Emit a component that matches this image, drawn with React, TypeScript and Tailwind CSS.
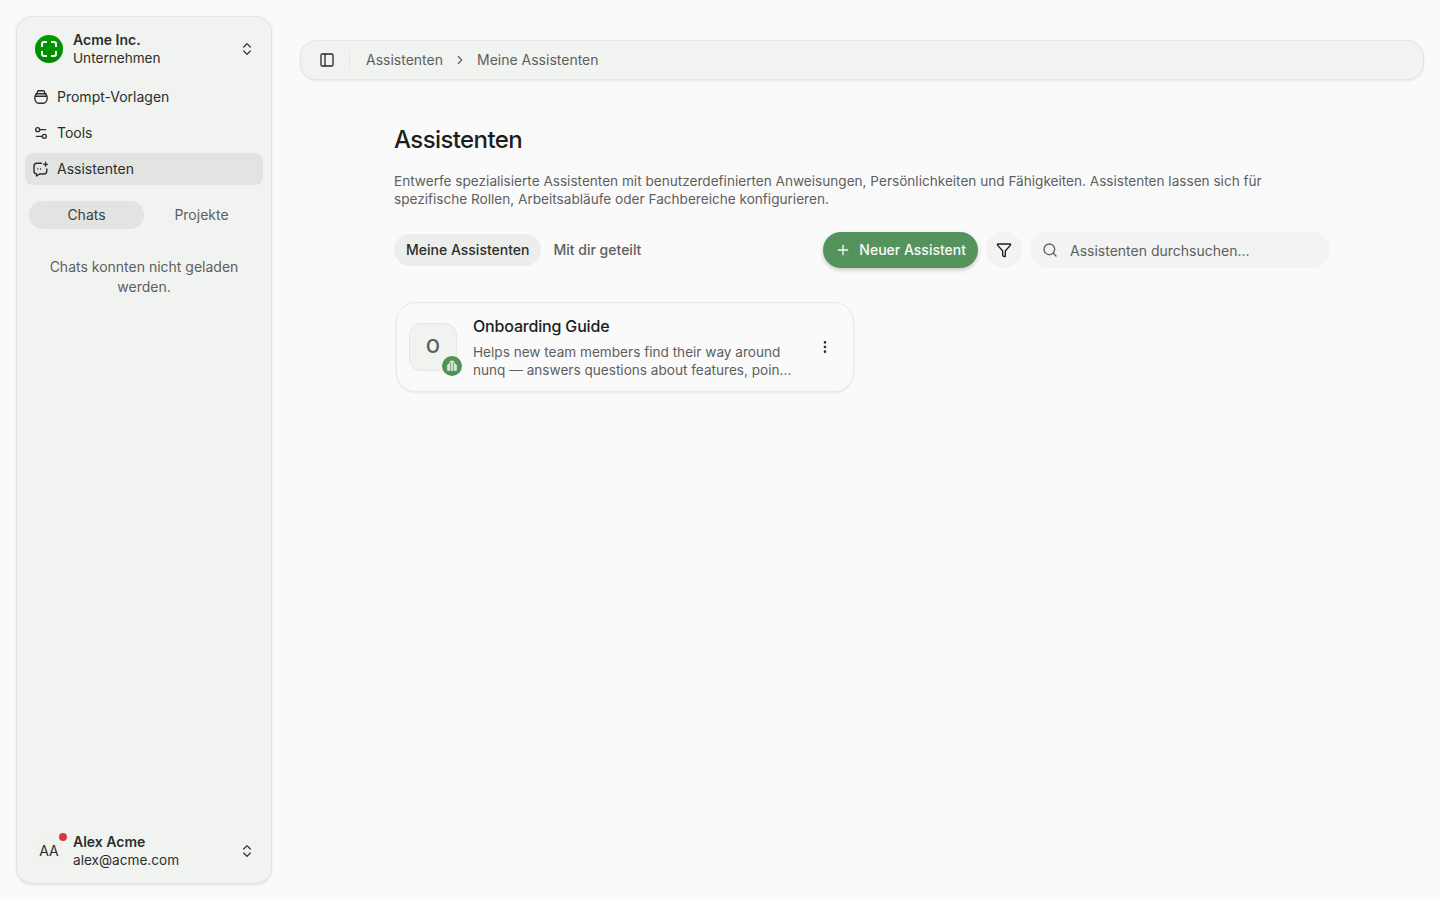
import React from "react";
import { ChevronRight, ChevronsUpDown, EllipsisVertical, Funnel, PanelLeft, Plus, Search, Settings2 } from "lucide-react";

function JarIcon() {
  return (
    <svg width="16" height="16" viewBox="0 0 16 16" fill="none" stroke="currentColor" strokeWidth="1.4" strokeLinecap="round" strokeLinejoin="round" className="shrink-0">
      <path d="M4.4 4.6V3.100c0-.8.6-1.400 1.400-1.400h4.400c.8 0 1.400.6 1.400 1.400v1.500" />
      <path d="M3 4.800h10" />
      <path d="M2.500 7.300h11" />
      <path d="M3.400 4.900C2.300 6 1.800 7.300 1.800 8.700c0 3.200 1.700 5.500 4 5.500h4.400c2.300 0 4-2.300 4-5.500 0-1.400-.5-2.700-1.600-3.800" />
    </svg>
  );
}

function ChatSparkIcon() {
  return (
    <svg width="16" height="16" viewBox="0 0 16 16" fill="none" stroke="currentColor" strokeWidth="1.4" strokeLinecap="round" strokeLinejoin="round" className="shrink-0">
      <path d="M8.500 2.200H3.900A2.900 2.900 0 0 0 1 5.100v5a2.900 2.900 0 0 0 2.600 2.900v2l3-2h4.300a2.900 2.900 0 0 0 2.900-2.900V8" />
      <path d="M12.600 .9l.6 1.800 1.800.6-1.800.6-.6 1.800-.6-1.800-1.800-.6 1.800-.6z" fill="currentColor" strokeWidth="0.6" />
      <path d="M4.800 8h.01M7.600 8h.01" />
    </svg>
  );
}

function NavItem({ icon, label, active }: { icon: React.ReactNode; label: string; active?: boolean }) {
  return (
    <div className={`flex h-8 items-center gap-2 rounded-lg px-2 text-sm text-[#2b2e2c] ${active ? "bg-[#e2e4e2]" : ""}`}>
      {icon}
      <span>{label}</span>
    </div>
  );
}

export default function App() {
  return (
    <div
      className="flex h-[900px] w-[1440px] overflow-hidden bg-[#fafafa] text-[#1c1e1d] antialiased"
      style={{ fontFamily: '"Inter", "Liberation Sans", sans-serif' }}
    >
      <div className="w-[288px] shrink-0 p-4">
        <aside className="flex h-full flex-col rounded-2xl border border-[#e3e5e3] bg-[#f1f3f0] p-2 shadow-[0_1px_3px_rgba(0,0,0,0.1)]">
          <div className="flex h-12 items-center gap-2.5 pl-[10px] pr-2">
            <div className="flex h-7 w-7 shrink-0 items-center justify-center rounded-full bg-gradient-to-b from-[#009c00] to-[#008500]">
              <svg width="18" height="18" viewBox="0 0 18 18" fill="none" stroke="#ffffff" strokeWidth="2">
                <path d="M2 7V4a2 2 0 0 1 2-2h3M11 2h3a2 2 0 0 1 2 2v3M16 11v3a2 2 0 0 1-2 2h-3M7 16H4a2 2 0 0 1-2-2v-3" />
              </svg>
            </div>
            <div className="min-w-0 flex-1">
              <div className="text-sm leading-[18px] font-semibold text-[#2b2e2c]">Acme Inc.</div>
              <div className="text-[13.6px] leading-[18px] text-[#2b2e2c]">Unternehmen</div>
            </div>
            <ChevronsUpDown size={16} strokeWidth={1.8} className="text-[#2b2e2c]" />
          </div>
          <nav className="mt-2 flex flex-col gap-1">
            <NavItem icon={<JarIcon />} label="Prompt-Vorlagen" />
            <NavItem icon={<Settings2 size={16} strokeWidth={2} className="shrink-0" />} label="Tools" />
            <NavItem icon={<ChatSparkIcon />} label="Assistenten" active />
          </nav>
          <div className="mt-4 grid grid-cols-2 gap-0 px-1 text-sm">
            <div className="flex h-7 items-center justify-center rounded-full bg-[#e2e4e2] text-[#3b3e3c]">Chats</div>
            <div className="flex h-7 items-center justify-center text-[#5d605e]">Projekte</div>
          </div>
          <p className="mt-7 px-4 text-center text-sm leading-5 text-[#5d605e]">Chats konnten nicht geladen werden.</p>
          <div className="mt-auto flex h-12 items-center gap-2.5 pl-[10px] pr-2">
            <div className="relative flex h-7 w-7 shrink-0 items-center justify-center rounded-full bg-[#eff1ee] text-sm text-[#2b2e2c]">
              AA
              <span className="absolute right-[-4px] top-[-4px] h-2 w-2 rounded-full bg-[#d63b3b]" />
            </div>
            <div className="min-w-0 flex-1">
              <div className="text-sm leading-[18px] font-semibold text-[#2b2e2c]">Alex Acme</div>
              <div className="text-[13.6px] leading-[18px] text-[#2b2e2c]">alex@acme.com</div>
            </div>
            <ChevronsUpDown size={16} strokeWidth={1.8} className="text-[#2b2e2c]" />
          </div>
        </aside>
      </div>

      <main className="min-w-0 flex-1 pl-3 pr-4 pt-10">
        <header className="flex h-10 items-center rounded-2xl border border-[#e3e5e3] bg-[#f1f3f0] pl-[18px] shadow-[0_1px_2px_rgba(0,0,0,0.08)]">
          <PanelLeft size={16} strokeWidth={2} className="text-[#2b2e2c]" />
          <div className="ml-[14px] mr-4 h-4 w-px bg-[#e3e5e3]" />
          <span className="text-sm text-[#5d605e]">Assistenten</span>
          <ChevronRight size={14} className="mx-2.5 text-[#5d605e]" />
          <span className="text-sm text-[#5d605e]">Meine Assistenten</span>
        </header>

        <section className="ml-[94px] w-[936px] pt-[44px]">
          <h1 className="text-2xl font-medium leading-8 tracking-tight text-[#1c1e1d]">Assistenten</h1>
          <p className="mt-4 w-[900px] text-[13.6px] leading-[18px] text-[#5d605e]">
            Entwerfe spezialisierte Assistenten mit benutzerdefinierten Anweisungen, Persönlichkeiten und Fähigkeiten. Assistenten lassen sich für spezifische Rollen, Arbeitsabläufe oder Fachbereiche konfigurieren.
          </p>
          <div className="mt-6 flex h-9 items-center">
            <div className="flex h-8 items-center rounded-full bg-[#eceeeb] px-3 text-sm font-medium text-[#2b2e2c]">Meine Assistenten</div>
            <div className="flex h-8 items-center px-3 text-sm font-medium text-[#5d605e]">Mit dir geteilt</div>
            <div className="ml-auto flex h-9 items-center gap-2 rounded-full bg-[#55935c] pl-3 pr-3 text-sm font-medium text-[#fafbfa] shadow-[0_2px_4px_rgba(0,0,0,0.2)]">
              <Plus size={16} strokeWidth={2} />
              Neuer Assistent
            </div>
            <div className="ml-2 flex h-9 w-9 items-center justify-center rounded-full bg-[#f2f3f2]">
              <Funnel size={16} strokeWidth={2} className="text-[#1c1e1d]" />
            </div>
            <div className="ml-2 flex h-9 w-[300px] items-center gap-3 rounded-full bg-[#f2f3f2] pl-3 text-sm text-[#5d605e]">
              <Search size={16} strokeWidth={2} className="text-[#5d605e]" />
              <span className="translate-y-[0.5px]">Assistenten durchsuchen...</span>
            </div>
          </div>

          <div className="ml-0.5 mt-[34px] flex h-[90px] w-[458px] items-center rounded-[20px] border border-[#e9ebe9] bg-[#fafafa] pl-3 pr-5 shadow-[0_1px_2px_rgba(0,0,0,0.08)]">
            <div className="relative flex h-12 w-12 shrink-0 items-center justify-center rounded-xl border border-[#e5e7e5] bg-[#f1f3f0] text-lg font-semibold text-[#5d605e]">
              O
              <span className="absolute -bottom-1.5 -right-1.5 flex h-5 w-5 items-center justify-center rounded-full bg-[#4f9156]">
                <svg width="14" height="14" viewBox="0 0 12 12" fill="#d5e7d7" stroke="#4f9156" strokeWidth="0.6">
                  <path d="M3.600 2.400C3.600 1.400 4.700 1 6 1s2.400.4 2.400 1.400v1c1.200.5 2.100 1.600 2.100 3V9.500c0 .6-.4 1-1 1h-7c-.6 0-1-.4-1-1V6.400c0-1.400.9-2.500 2.100-3z" />
                  <path d="M4.800 3V10.500M7.200 3V10.500" fill="none" />
                </svg>
              </span>
            </div>
            <div className="ml-4 min-w-0 flex-1 pb-0.5">
              <div className="text-base font-medium leading-6 tracking-[-0.011em] text-[#1c1e1d]">Onboarding Guide</div>
              <div className="mt-[5px] text-[13.6px] leading-[18px] text-[#5d605e]">
                Helps new team members find their way around
                <br />
                nunq — answers questions about features, poin...
              </div>
            </div>
            <EllipsisVertical size={16} className="shrink-0 text-[#2b2e2c]" />
          </div>
        </section>
      </main>
    </div>
  );
}
